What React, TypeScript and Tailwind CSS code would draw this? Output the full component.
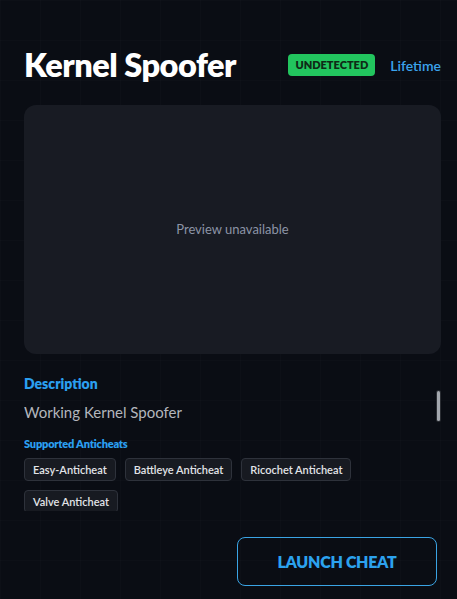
const anticheats = ["Easy-Anticheat", "Battleye Anticheat", "Ricochet Anticheat", "Valve Anticheat"];

const App = () => {
  return (
    <div
      className="min-h-screen w-full bg-[#0a0d14] bg-[linear-gradient(rgba(255,255,255,0.012)_1px,transparent_1px),linear-gradient(90deg,rgba(255,255,255,0.012)_1px,transparent_1px)] bg-[size:40px_40px] text-white"
      style={{ fontFamily: "Lato, 'Noto Sans', sans-serif" }}
    >
      <div className="pl-6 pr-4 pt-[47px] pb-4">
        {/* header */}
        <div className="flex h-9 items-center justify-between">
          <h1 className="text-[32.5px] font-extrabold tracking-[-0.5px] leading-9 text-white">Kernel Spoofer</h1>
          <div className="flex items-center gap-[15px]">
            <span className="rounded-[4px] bg-[#22c55e] px-[7px] py-[4px] text-[11px] font-extrabold leading-[14px] text-[#0f2a17]">
              UNDETECTED
            </span>
            <span className="text-[14px] font-semibold text-[#3ba3ec]">Lifetime</span>
          </div>
        </div>

        {/* preview */}
        <div className="mt-[22px] flex h-[249px] items-center justify-center rounded-xl bg-[#181b23]">
          <span className="text-[13px] text-[#8c94a6]">Preview unavailable</span>
        </div>

        {/* details */}
        <div className="relative mt-5 h-[137px] overflow-hidden">
          <h2 className="text-[14px] font-extrabold leading-5 text-[#2b9ff0]">Description</h2>
          <p className="mt-2 text-[15px] leading-5 text-[#b3b6bd]">Working Kernel Spoofer</p>
          <h3 className="mt-[14px] text-[11px] font-extrabold leading-4 tracking-[-0.2px] text-[#2b9ff0]">Supported Anticheats</h3>
          <div className="mt-1.5 flex flex-wrap gap-x-[9px] gap-y-[9px]">
            {anticheats.map((a) => (
              <span
                key={a}
                className="h-[23px] rounded-[4px] border border-[#2e323b] bg-[#171a21] px-[8px] text-[11px] font-semibold leading-[21px] text-[#e2e4e8]"
              >
                {a}
              </span>
            ))}
          </div>
          <div className="absolute right-[1px] top-[17px] h-[30px] w-[3px] rounded-sm bg-[#a3a7ae] ring-1 ring-[#2a2d33]" />
        </div>

        {/* action */}
        <div className="mt-[26px] flex justify-end pr-1">
          <button className="h-[49px] w-[200px] rounded-lg border border-[#3aa4e4] text-[16px] font-extrabold tracking-[-0.3px] text-[#2ca2ee]">
            LAUNCH CHEAT
          </button>
        </div>
      </div>
    </div>
  );
};

export default App;
